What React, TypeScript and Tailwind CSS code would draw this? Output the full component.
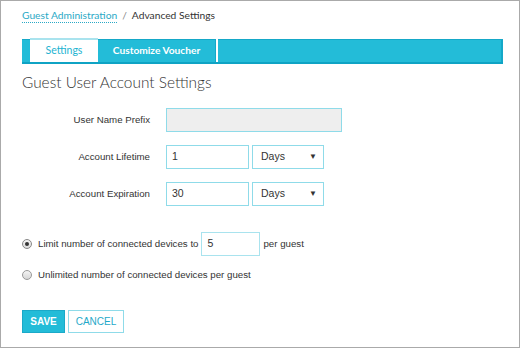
import React from "react";

export default function App() {
  const arial = { fontFamily: '"Liberation Sans", Arial, sans-serif' };
  return (
    <div className="w-[520px] h-[348px] bg-white border border-[#aaaaaa] box-border overflow-hidden" style={{ fontFamily: 'Lato, "Open Sans", sans-serif' }}>
      <div className="pl-[21px] pr-[16px]">
        {/* breadcrumb */}
        <div className="h-[38px] flex items-start pt-[8px] text-[10.25px] text-[#333]">
          <span className="text-[#2aa9c6] border-b border-dotted border-[#2aa9c6] leading-[13px]">Guest Administration</span>
          <span className="mx-[5px] text-[#888] leading-[13px]">/</span>
          <span className="leading-[13px]">Advanced Settings</span>
        </div>
        {/* tabs */}
        <div className="flex h-[25px] border-b-2 border-[#0fa3c4]">
          <div className="w-[8px] bg-[#23bcd8] border-t border-[#15a8c8]" />
          <div className="w-[68px] -mt-[1px] bg-white border-t-2 border-[#a9e3ee] flex items-center justify-center text-[10.5px] text-[#23b3d1]">Settings</div>
          <div className="w-[118px] bg-[#23bcd8] border-t border-r border-[#15a8c8] flex items-center justify-center text-[10.2px] font-bold text-white">Customize Voucher</div>
          <div className="w-[2px] bg-white" />
          <div className="flex-1 bg-[#23bcd8] border-t border-r-2 border-[#15a8c8]" />
        </div>
        {/* title */}
        <div className="mt-[8px] text-[15.4px] font-light text-[#333] leading-[20px]">Guest User Account Settings</div>
        {/* form */}
        <div className="mt-[16px] flex flex-col gap-[13px] text-[9.7px] text-[#333]" style={arial}>
          <div className="flex items-center h-[24px]">
            <div className="w-[128px] text-right">User Name Prefix</div>
            <div className="ml-[16px] w-[176px] h-[24px] bg-[#eeeeee] border border-[#8fdbe9]" />
          </div>
          <div className="flex items-center h-[24px]">
            <div className="w-[128px] text-right">Account Lifetime</div>
            <div className="ml-[16px] w-[83px] h-[24px] border border-[#8fdbe9] flex items-center pl-[5px] text-[10.5px]">1</div>
            <div className="ml-[3px] w-[72px] h-[24px] border border-[#8fdbe9] flex items-center justify-between pl-[8px] pr-[6px] text-[10.5px]">
              <span>Days</span>
              <span className="text-[8px]">▼</span>
            </div>
          </div>
          <div className="flex items-center h-[24px]">
            <div className="w-[128px] text-right">Account Expiration</div>
            <div className="ml-[16px] w-[83px] h-[24px] border border-[#8fdbe9] flex items-center pl-[5px] text-[10.5px]">30</div>
            <div className="ml-[3px] w-[72px] h-[24px] border border-[#8fdbe9] flex items-center justify-between pl-[8px] pr-[6px] text-[10.5px]">
              <span>Days</span>
              <span className="text-[8px]">▼</span>
            </div>
          </div>
        </div>
        {/* radios */}
        <div className="mt-[26px] flex flex-col text-[9.7px] text-[#333]" style={arial}>
          <div className="flex items-center h-[24px]">
            <span className="w-[10px] h-[10px] rounded-full border border-[#888] bg-gradient-to-b from-[#f4f4f4] to-[#dcdcdc] flex items-center justify-center">
              <span className="w-[4px] h-[4px] rounded-full bg-[#333]" />
            </span>
            <span className="ml-[6px]">Limit number of connected devices to</span>
            <div className="ml-[3px] w-[59px] h-[24px] border border-[#a9e3ee] flex items-center pl-[5px] text-[10.5px]">5</div>
            <span className="ml-[3px]">per guest</span>
          </div>
          <div className="flex items-center h-[14px] mt-[12px]">
            <span className="w-[10px] h-[10px] rounded-full border border-[#999] bg-gradient-to-b from-[#f4f4f4] to-[#d6d6d6]" />
            <span className="ml-[6px]">Unlimited number of connected devices per guest</span>
          </div>
        </div>
        {/* buttons */}
        <div className="mt-[28px] flex gap-[3px]" style={arial}>
          <div className="w-[43px] h-[23px] bg-[#23bcd8] border border-[#1ba9c8] text-white text-[10px] font-bold flex items-center justify-center">SAVE</div>
          <div className="w-[56px] h-[23px] bg-white border border-[#8fdbe9] text-[#1fa9c9] text-[10px] flex items-center justify-center">CANCEL</div>
        </div>
      </div>
    </div>
  );
}
